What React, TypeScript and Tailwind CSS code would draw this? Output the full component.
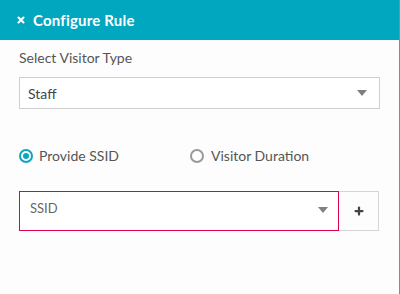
import { X, Plus } from "lucide-react";

function Caret() {
    return (
        <svg width="10" height="6" viewBox="0 0 10 6" className="shrink-0">
            <path d="M0 0 L10 0 L5 6 Z" fill="#808080" />
        </svg>
    );
}

export default function App() {
    return (
        <div className="w-[400px] h-[294px] bg-[#fdfdfd] border-r border-[#8a8a8a] font-['Lato',sans-serif] text-[#555]">
            {/* Header */}
            <div className="h-10 bg-[#01a6bf] flex items-center pl-4 gap-[7px] text-white">
                <X className="w-[10px] h-[10px]" strokeWidth={5} />
                <span className="text-[15px] font-bold tracking-[0.2px]">Configure Rule</span>
            </div>

            <div className="pl-[19px] pr-[19px]">
                <div className="mt-[10px] text-[14px] leading-4">Select Visitor Type</div>

                <div className="mt-[11px] h-8 border border-[#cfcfcf] bg-white flex items-center justify-between pl-[8px] pr-[12px] text-[14px] text-[#444]">
                    <span>Staff</span>
                    <Caret />
                </div>

                {/* Radio row */}
                <div className="mt-[39px] flex items-center text-[14px] leading-4">
                    <div className="flex items-center gap-[6px] w-[171px]">
                        <span className="w-[14px] h-[14px] rounded-full border-2 border-[#0fa5bd] flex items-center justify-center">
                            <span className="w-[6px] h-[6px] rounded-full bg-[#0fa5bd]" />
                        </span>
                        <span>Provide SSID</span>
                    </div>
                    <div className="flex items-center gap-[7px]">
                        <span className="w-[14px] h-[14px] rounded-full border-2 border-[#9a9a9a]" />
                        <span>Visitor Duration</span>
                    </div>
                </div>

                {/* SSID select with add */}
                <div className="mt-[27px] flex">
                    <div className="w-[320px] h-10 border border-[#e0004f] bg-white flex items-start justify-between pl-[10px] pr-[10px] pt-[7px] text-[13px] text-[#666]">
                        <span>SSID</span>
                        <span className="mt-[8px]"><Caret /></span>
                    </div>
                    <div className="w-10 h-10 border border-l-0 border-[#d5d5d5] flex items-center justify-center">
                        <Plus className="w-3 h-3 text-[#444]" strokeWidth={4.5} />
                    </div>
                </div>
            </div>
        </div>
    );
}
